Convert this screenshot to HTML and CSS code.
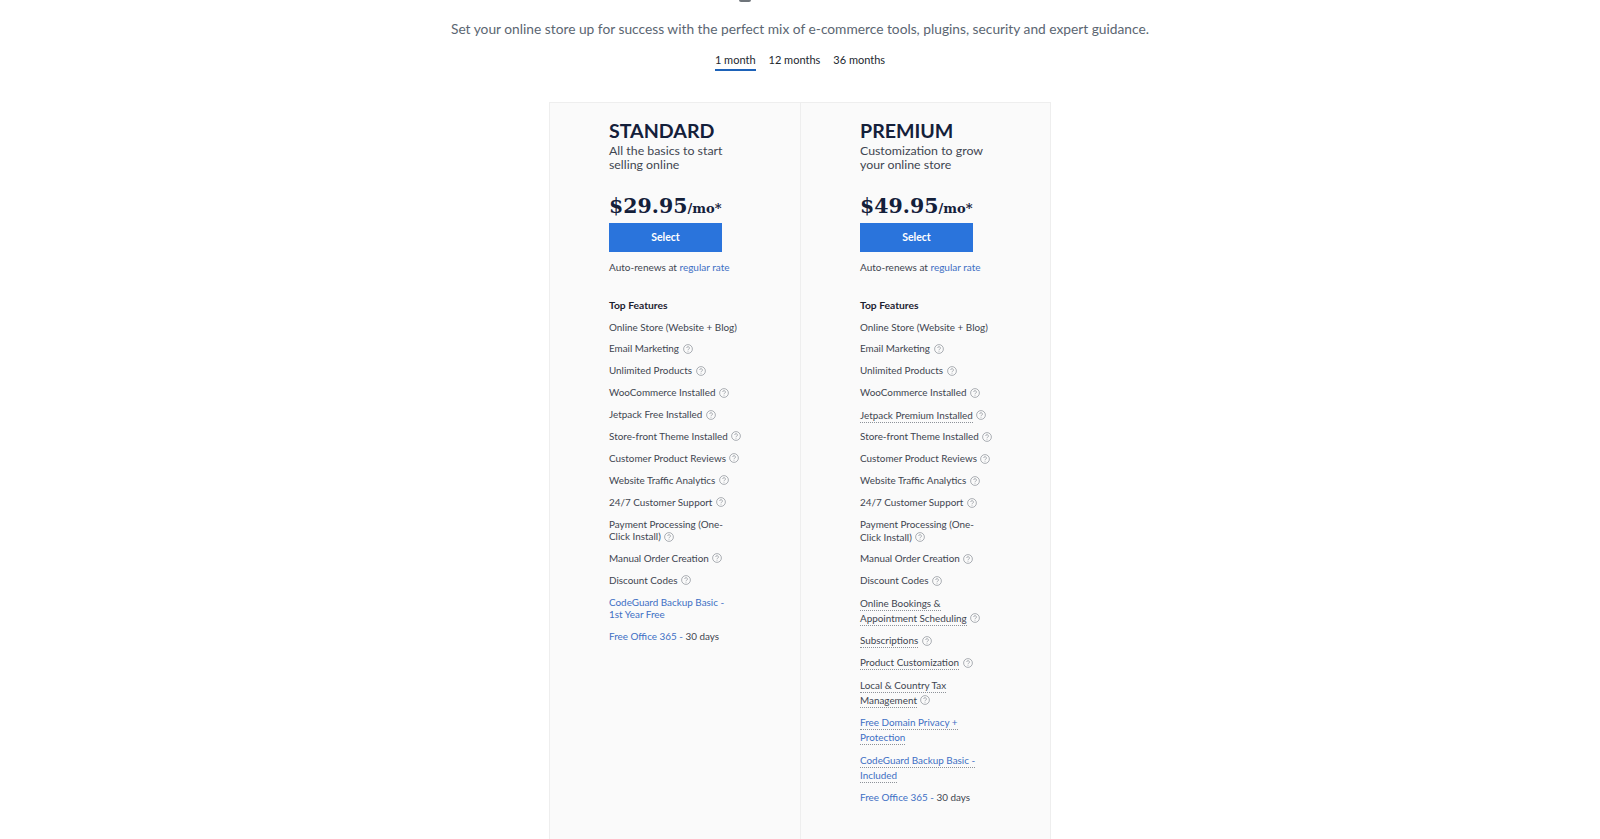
FILE: index.html
```html
<!DOCTYPE html>
<html lang="en">
<head>
<meta charset="utf-8">
<title>Online store plans</title>
<link rel="stylesheet" href="styles.css">
</head>
<body>
<svg class="defs" width="0" height="0" aria-hidden="true">
  <symbol id="help" viewBox="0 0 10 10">
    <circle cx="5" cy="5" r="4.4" fill="none" stroke="#8a8f96" stroke-width=".7"/>
    <path d="M3.7 4a1.35 1.35 0 1 1 2 1.2c-.5.3-.7.5-.7 1" fill="none" stroke="#8a8f96" stroke-width=".7"/>
    <circle cx="5" cy="7.3" r=".45" fill="#8a8f96"/>
  </symbol>
</svg>
<main class="page">
  <div class="hero-tail"></div>
  <p class="lead">Set your online store up for success with the perfect mix of e-commerce tools, plugins, security and expert guidance.</p>
  <nav class="tabs">
    <a class="tab active">1 month</a>
    <a class="tab">12 months</a>
    <a class="tab">36 months</a>
  </nav>
  <section class="plans">
    <article class="plan">
      <div class="plan-inner">
        <h2 class="plan-name">STANDARD</h2>
        <p class="plan-desc">All the basics to start selling online</p>
        <p class="price">$29.95<span class="per">/mo*</span></p>
        <a class="select">Select</a>
        <p class="renew">Auto-renews at <a class="link">regular rate</a></p>
        <h3 class="features-title">Top Features</h3>
        <ul class="features">
          <li>Online Store (Website + Blog)</li>
          <li>Email Marketing <svg class="help"><use href="#help"/></svg></li>
          <li>Unlimited Products <svg class="help"><use href="#help"/></svg></li>
          <li>WooCommerce Installed <svg class="help"><use href="#help"/></svg></li>
          <li>Jetpack Free Installed <svg class="help"><use href="#help"/></svg></li>
          <li>Store-front Theme Installed <svg class="help"><use href="#help"/></svg></li>
          <li>Customer Product Reviews <svg class="help"><use href="#help"/></svg></li>
          <li>Website Traffic Analytics <svg class="help"><use href="#help"/></svg></li>
          <li>24/7 Customer Support <svg class="help"><use href="#help"/></svg></li>
          <li>Payment Processing (One-Click Install) <svg class="help"><use href="#help"/></svg></li>
          <li>Manual Order Creation <svg class="help"><use href="#help"/></svg></li>
          <li>Discount Codes <svg class="help"><use href="#help"/></svg></li>
          <li><a class="link">CodeGuard Backup Basic -<br>1st Year Free</a></li>
          <li><a class="link">Free Office 365 -</a> 30 days</li>
        </ul>
      </div>
    </article>
    <article class="plan">
      <div class="plan-inner">
        <h2 class="plan-name">PREMIUM</h2>
        <p class="plan-desc">Customization to grow your online store</p>
        <p class="price">$49.95<span class="per">/mo*</span></p>
        <a class="select">Select</a>
        <p class="renew">Auto-renews at <a class="link">regular rate</a></p>
        <h3 class="features-title">Top Features</h3>
        <ul class="features">
          <li>Online Store (Website + Blog)</li>
          <li>Email Marketing <svg class="help"><use href="#help"/></svg></li>
          <li>Unlimited Products <svg class="help"><use href="#help"/></svg></li>
          <li>WooCommerce Installed <svg class="help"><use href="#help"/></svg></li>
          <li class="tall"><span class="dotted">Jetpack Premium Installed</span> <svg class="help"><use href="#help"/></svg></li>
          <li>Store-front Theme Installed <svg class="help"><use href="#help"/></svg></li>
          <li>Customer Product Reviews <svg class="help"><use href="#help"/></svg></li>
          <li>Website Traffic Analytics <svg class="help"><use href="#help"/></svg></li>
          <li>24/7 Customer Support <svg class="help"><use href="#help"/></svg></li>
          <li>Payment Processing (One-Click Install) <svg class="help"><use href="#help"/></svg></li>
          <li>Manual Order Creation <svg class="help"><use href="#help"/></svg></li>
          <li>Discount Codes <svg class="help"><use href="#help"/></svg></li>
          <li class="tall"><span class="dotted">Online Bookings &amp; Appointment Scheduling</span> <svg class="help"><use href="#help"/></svg></li>
          <li class="tall"><span class="dotted">Subscriptions</span> <svg class="help"><use href="#help"/></svg></li>
          <li class="tall"><span class="dotted">Product Customization</span> <svg class="help"><use href="#help"/></svg></li>
          <li class="tall"><span class="dotted">Local &amp; Country Tax Management</span> <svg class="help"><use href="#help"/></svg></li>
          <li class="tall"><a class="link dotted">Free Domain Privacy + Protection</a></li>
          <li class="tall"><a class="link dotted">CodeGuard Backup Basic - Included</a></li>
          <li><a class="link">Free Office 365 -</a> 30 days</li>
        </ul>
      </div>
    </article>
  </section>
</main>
</body>
</html>
```
FILE: styles.css
```css
* { box-sizing: border-box; }
html, body { margin: 0; height: 839px; overflow: hidden; background: #fff; }
body { font-family: "Lato", "Open Sans", sans-serif; color: #3e4550; }
.defs { position: absolute; }
.page { display: flex; flex-direction: column; align-items: center; }
.hero-tail { width: 12px; height: 2px; margin-right: 110px; background: #6f757b; border-radius: 0 0 3px 3px; }
.lead { margin: 17px 0 0; font-size: 13.75px; line-height: 20px; color: #5b6672; }
.tabs { display: flex; gap: 13px; margin-top: 11px; }
.tab { font-size: 11px; line-height: 15px; padding: 2px 0 2px; color: #23282f; border-bottom: 2px solid transparent; }
.tab.active { border-bottom-color: #1d62b8; }
.plans { display: flex; width: 502px; margin-top: 31px; height: 760px; background: #fafafa; border: 1px solid #eeeeee; border-bottom: 0; }
.plan { flex: 1 1 50%; }
.plan + .plan { border-left: 1px solid #eeeeee; }
.plan-inner { width: 172px; margin-left: 59px; padding-top: 18px; }
.plan-name { margin: 0; font-size: 19.6px; line-height: 20px; font-weight: 700; color: #14203a; }
.plan-desc { margin: 3px 0 0; width: 132px; font-size: 12.35px; line-height: 14px; color: #3f4651; }
.price { margin: 20px 0 0; font-family: "DejaVu Serif", "Liberation Serif", serif; font-size: 20.5px; line-height: 29px; font-weight: 700; color: #14203a; }
.per { font-size: 13px; }
.select { display: block; width: 113px; height: 29px; background: #2a74dc; color: #fff; font-size: 10.5px; font-weight: 700; line-height: 29px; text-align: center; }
.renew { margin: 9px 0 0; font-size: 10px; line-height: 12px; color: #3f4651; }
.link { color: #3d6fc4; }
.features-title { margin: 26px 0 0; font-size: 10.3px; line-height: 12px; font-weight: 700; color: #1c2230; }
.features { list-style: none; margin: 9.5px 0 0; padding: 0; width: 134px; font-size: 9.9px; line-height: 12.5px; }
.features li { margin-bottom: 9.4px; }
.features li.tall { line-height: 15px; margin-top: -.5px; margin-bottom: 7.9px; }
.dotted { border-bottom: 1px dotted #8d9299; padding-bottom: 1px; }
.help { display: inline-block; width: 10px; height: 10px; margin-left: 1px; vertical-align: -1.5px; }
```
